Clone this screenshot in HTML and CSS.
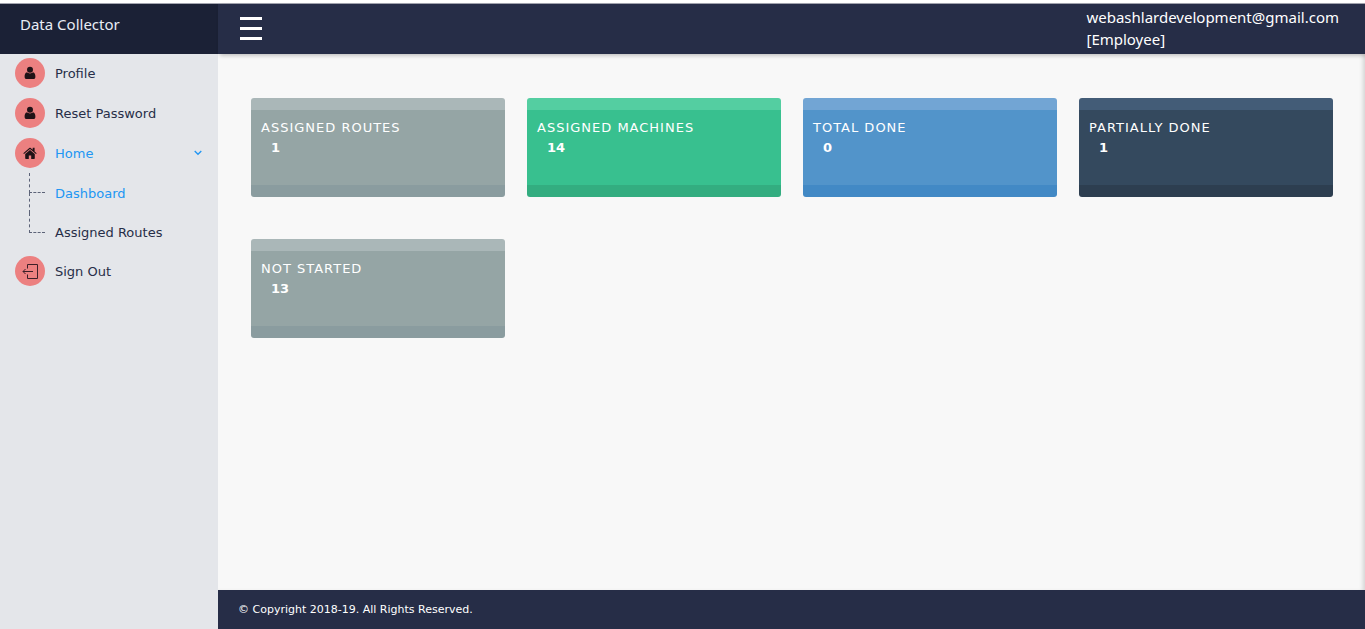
FILE: index.html
```html
<!DOCTYPE html>
<html lang="en">
<head>
    <meta charset="UTF-8">
    <meta name="viewport" content="width=device-width, initial-scale=1.0">
    <title>Data Collector</title>
    <link rel="stylesheet" href="styles.css">
</head>
<body>
    <header class="header">
        <div class="logo"><a href="#">Data Collector</a></div>
        <div class="navbar">
            <button type="button" class="menu-toggle" aria-label="Toggle menu">
                <span></span>
                <span></span>
                <span></span>
            </button>
            <div class="user">webashlardevelopment@gmail.com<br>[Employee]</div>
        </div>
    </header>

    <div class="wrapper">
        <nav class="sidebar">
            <ul class="menu">
                <li>
                    <a href="#">
                        <span class="icon">
                            <svg width="12" height="14" viewBox="0 0 12 14"><circle cx="6" cy="3.7" r="3"/><path d="M3 6.3C1.3 6.6.6 8.3.6 10.7c0 1.5.8 2.3 2 2.3h6.8c1.2 0 2-.8 2-2.3 0-2.4-.7-4.1-2.4-4.4C8.2 7 7.2 7.5 6 7.5S3.8 7 3 6.3z"/></svg>
                        </span>
                        Profile
                    </a>
                </li>
                <li>
                    <a href="#">
                        <span class="icon">
                            <svg width="12" height="14" viewBox="0 0 12 14"><circle cx="6" cy="3.7" r="3"/><path d="M3 6.3C1.3 6.6.6 8.3.6 10.7c0 1.5.8 2.3 2 2.3h6.8c1.2 0 2-.8 2-2.3 0-2.4-.7-4.1-2.4-4.4C8.2 7 7.2 7.5 6 7.5S3.8 7 3 6.3z"/></svg>
                        </span>
                        Reset Password
                    </a>
                </li>
                <li>
                    <a href="#" class="active">
                        <span class="icon">
                            <svg width="14" height="12" viewBox="0 0 14 12"><path d="M7 3 2.2 7v4.2c0 .4.3.7.7.7h2.9V8.4h2.4v3.5h2.9c.4 0 .7-.3.7-.7V7z"/><path d="M.3 6.2 6.3 1.1c.4-.35 1-.35 1.400 0l2 1.700V.8h1.900v3.600l2.100 1.800-.7.8L7 2.100 1 7z"/></svg>
                        </span>
                        Home
                        <svg class="arrow" width="8" height="6" viewBox="0 0 8 6"><path d="M.7 1 4 4.300 7.300 1"/></svg>
                    </a>
                    <ul class="submenu">
                        <li><a href="#" class="active">Dashboard</a></li>
                        <li><a href="#">Assigned Routes</a></li>
                    </ul>
                </li>
                <li>
                    <a href="#">
                        <span class="icon">
                            <svg class="line" width="16" height="16" viewBox="0 0 16 16"><path d="M5.500 5.500v-4h10v14h-10v-4M11 8.500H1M3.500 6 1 8.500 3.500 11"/></svg>
                        </span>
                        Sign Out
                    </a>
                </li>
            </ul>
        </nav>

        <div class="content">
            <main class="cards">
                <div class="card gray">
                    <h3>Assigned Routes</h3>
                    <p>1</p>
                </div>
                <div class="card green">
                    <h3>Assigned Machines</h3>
                    <p>14</p>
                </div>
                <div class="card blue">
                    <h3>Total Done</h3>
                    <p>0</p>
                </div>
                <div class="card dark">
                    <h3>Partially Done</h3>
                    <p>1</p>
                </div>
                <div class="card gray">
                    <h3>Not Started</h3>
                    <p>13</p>
                </div>
            </main>
            <footer class="footer">© Copyright 2018-19. All Rights Reserved.</footer>
        </div>
    </div>
</body>
</html>
```
FILE: styles.css
```css
* {
    box-sizing: border-box;
}

body {
    display: flex;
    flex-direction: column;
    min-height: 100vh;
    margin: 0;
    padding-top: 3px;
    background: #fff;
    font-family: Verdana, "DejaVu Sans", sans-serif;
    font-size: 13px;
    color: #272e48;
}

ul {
    margin: 0;
    padding: 0;
    list-style: none;
}

a {
    color: inherit;
    text-decoration: none;
}

/* header */
.header {
    position: relative;
    display: flex;
    height: 51px;
    border-top: 1px solid #a3a5b0;
    color: #fff;
    font-family: "Noto Sans", sans-serif;
    font-size: 15px;
    line-height: 22px;
}

.logo {
    width: 218px;
    padding: 9px 20px;
    background: #1b2136;
    color: #e9edf5;
}

.navbar {
    flex: 1;
    display: flex;
    justify-content: space-between;
    padding: 2px 26px 0 22px;
    background: #262d47;
    box-shadow: 2px 2px 4px rgba(0, 0, 0, 0.2);
}

.menu-toggle {
    display: flex;
    flex-direction: column;
    gap: 7px;
    width: 22px;
    margin: 11px 0 0;
    padding: 0;
    border: none;
    background: none;
    cursor: pointer;
}

.menu-toggle span {
    width: 22px;
    height: 3px;
    background: #fff;
}

/* sidebar */
.wrapper {
    flex: 1;
    display: flex;
}

.sidebar {
    width: 218px;
    background: #e4e6ea;
}

.menu {
    margin-top: -1px;
}

.menu > li > a {
    display: flex;
    align-items: center;
    gap: 10px;
    height: 40px;
    padding: 0 16px 0 15px;
}

.icon {
    display: flex;
    align-items: center;
    justify-content: center;
    width: 30px;
    height: 30px;
    border-radius: 50%;
    background: #ec8080;
}

.icon svg {
    fill: #201216;
}

.icon .line {
    fill: none;
    stroke: #3c2028;
}

.arrow {
    margin-left: auto;
    fill: none;
    stroke: #2196f3;
    stroke-width: 1.3;
}

.menu .active {
    color: #2196f3;
}

.submenu {
    padding-left: 29px;
}

.submenu li {
    display: grid;
    grid-template-columns: 16px 1fr;
    grid-template-rows: 20px 20px;
    column-gap: 10px;
}

.submenu li:last-child {
    grid-template-rows: 20px 18px;
}

.submenu a {
    grid-column: 2;
    grid-row: 1 / 3;
    align-self: center;
}

.submenu li::before {
    content: "";
    grid-column: 1;
    grid-row: 1;
    border-left: 1px dashed #5c6378;
    border-bottom: 1px dashed #5c6378;
}

.submenu li:first-child::after {
    content: "";
    grid-column: 1;
    grid-row: 2;
    border-left: 1px dashed #5c6378;
}

/* content */
.content {
    flex: 1;
    display: flex;
    flex-direction: column;
    background: #f8f8f8;
}

.cards {
    flex: 1;
    display: grid;
    grid-template-columns: repeat(4, 1fr);
    align-content: start;
    gap: 42px 22px;
    padding: 44px 32px 44px 33px;
    box-shadow: inset -4px 0 4px -2px rgba(0, 0, 0, 0.15);
}

.card {
    min-height: 99px;
    padding: 8px 10px;
    border-top: 12px solid;
    border-bottom: 12px solid;
    border-radius: 3px;
    color: #fff;
}

.card h3 {
    margin: 0;
    font-size: 13px;
    font-weight: normal;
    line-height: 20px;
    letter-spacing: 1px;
    text-transform: uppercase;
}

.card p {
    margin: 0;
    padding-left: 10px;
    font-weight: bold;
    line-height: 20px;
}

.gray {
    background: #95a5a5;
    border-color: #aab7b8 transparent #8a9c9f;
}

.green {
    background: #38c08f;
    border-color: #54cea1 transparent #33ad80;
}

.blue {
    background: #5294ca;
    border-color: #72a5d4 transparent #4289c5;
}

.dark {
    background: #34495e;
    border-color: #435c77 transparent #2d3e50;
}

.footer {
    padding: 10px 20px 9px;
    background: #262d47;
    color: #fff;
    font-size: 11px;
    line-height: 20px;
}
```
